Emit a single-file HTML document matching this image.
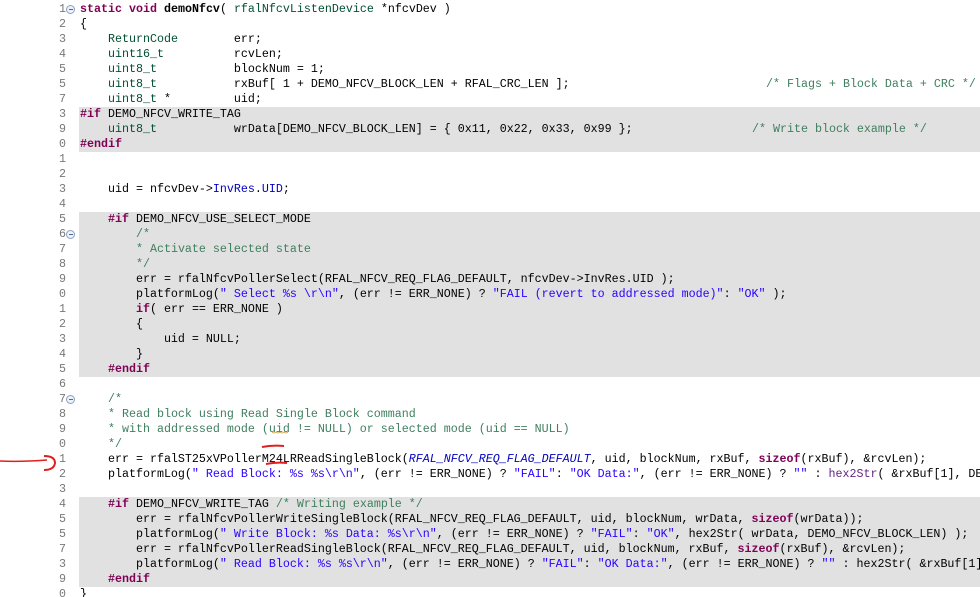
<!DOCTYPE html>
<html><head><meta charset="utf-8"><style>
body{margin:0;width:980px;height:595px;overflow:hidden;background:#fff;position:relative;font-family:"Liberation Mono",monospace;font-size:11.67px;}
#wrap{position:absolute;left:0;top:2px;width:980px;height:595px;overflow:hidden;}
.ln{position:absolute;left:0;width:980px;height:15px;line-height:15px;white-space:pre;overflow:hidden;}
.n{position:absolute;left:50px;width:16px;text-align:right;color:#787878;}
.tx{position:absolute;left:80px;color:#000;}
.bgc{position:absolute;left:79px;right:0;top:0;bottom:0;background:#e1e1e1;}
.k{color:#7f0055;font-weight:bold}
.t{color:#005032}
.s{color:#2a00ff}
.c{color:#3f7f5f}
.m{color:#0000c0;font-style:italic}
.f{color:#0000c0}
.h{color:#642880}
.fold{position:absolute;left:66px;top:3px;width:7px;height:7px;border:1px solid #8aa0c0;border-radius:50%;background:#eef2f8;}
.fold:after{content:"";position:absolute;left:1.5px;top:3px;width:4px;height:1px;background:#4a6a9a;}
.ab{position:absolute;}
</style></head><body>
<div id="wrap">
<div class="ln" style="top:0"><span class="n">1</span><span class="fold"></span><span class="tx"><span class="k">static</span> <span class="k">void</span> <b>demoNfcv</b>( <span class="t">rfalNfcvListenDevice</span> *nfcvDev )</span></div>
<div class="ln" style="top:15px"><span class="n">2</span><span class="tx">{</span></div>
<div class="ln" style="top:30px"><span class="n">3</span><span class="tx">    <span class="t">ReturnCode</span>        err;</span></div>
<div class="ln" style="top:45px"><span class="n">4</span><span class="tx">    <span class="t">uint16_t</span>          rcvLen;</span></div>
<div class="ln" style="top:60px"><span class="n">5</span><span class="tx">    <span class="t">uint8_t</span>           blockNum = 1;</span></div>
<div class="ln" style="top:75px"><span class="n">5</span><span class="tx">    <span class="t">uint8_t</span>           rxBuf[ 1 + DEMO_NFCV_BLOCK_LEN + RFAL_CRC_LEN ];<span class="c ab" style="left:686px">/* Flags + Block Data + CRC */</span></span></div>
<div class="ln" style="top:90px"><span class="n">7</span><span class="tx">    <span class="t">uint8_t</span> *         uid;</span></div>
<div class="ln" style="top:105px"><span class="bgc"></span><span class="n">3</span><span class="tx"><span class="k">#if</span> DEMO_NFCV_WRITE_TAG</span></div>
<div class="ln" style="top:120px"><span class="bgc"></span><span class="n">9</span><span class="tx">    <span class="t">uint8_t</span>           wrData[DEMO_NFCV_BLOCK_LEN] = { 0x11, 0x22, 0x33, 0x99 };<span class="c ab" style="left:672px">/* Write block example */</span></span></div>
<div class="ln" style="top:135px"><span class="bgc"></span><span class="n">0</span><span class="tx"><span class="k">#endif</span></span></div>
<div class="ln" style="top:150px"><span class="n">1</span></div>
<div class="ln" style="top:165px"><span class="n">2</span></div>
<div class="ln" style="top:180px"><span class="n">3</span><span class="tx">    uid = nfcvDev-&gt;<span class="f">InvRes</span>.<span class="f">UID</span>;</span></div>
<div class="ln" style="top:195px"><span class="n">4</span></div>
<div class="ln" style="top:210px"><span class="bgc"></span><span class="n">5</span><span class="tx">    <span class="k">#if</span> DEMO_NFCV_USE_SELECT_MODE</span></div>
<div class="ln" style="top:225px"><span class="bgc"></span><span class="n">6</span><span class="fold"></span><span class="tx">        <span class="c">/*</span></span></div>
<div class="ln" style="top:240px"><span class="bgc"></span><span class="n">7</span><span class="tx">        <span class="c">* Activate selected state</span></span></div>
<div class="ln" style="top:255px"><span class="bgc"></span><span class="n">8</span><span class="tx">        <span class="c">*/</span></span></div>
<div class="ln" style="top:270px"><span class="bgc"></span><span class="n">9</span><span class="tx">        err = rfalNfcvPollerSelect(RFAL_NFCV_REQ_FLAG_DEFAULT, nfcvDev-&gt;InvRes.UID );</span></div>
<div class="ln" style="top:285px"><span class="bgc"></span><span class="n">0</span><span class="tx">        platformLog(<span class="s">" Select %s \r\n"</span>, (err != ERR_NONE) ? <span class="s">"FAIL (revert to addressed mode)"</span>: <span class="s">"OK"</span> );</span></div>
<div class="ln" style="top:300px"><span class="bgc"></span><span class="n">1</span><span class="tx">        <span class="k">if</span>( err == ERR_NONE )</span></div>
<div class="ln" style="top:315px"><span class="bgc"></span><span class="n">2</span><span class="tx">        {</span></div>
<div class="ln" style="top:330px"><span class="bgc"></span><span class="n">3</span><span class="tx">            uid = NULL;</span></div>
<div class="ln" style="top:345px"><span class="bgc"></span><span class="n">4</span><span class="tx">        }</span></div>
<div class="ln" style="top:360px"><span class="bgc"></span><span class="n">5</span><span class="tx">    <span class="k">#endif</span></span></div>
<div class="ln" style="top:375px"><span class="n">6</span></div>
<div class="ln" style="top:390px"><span class="n">7</span><span class="fold"></span><span class="tx">    <span class="c">/*</span></span></div>
<div class="ln" style="top:405px"><span class="n">8</span><span class="tx">    <span class="c">* Read block using Read Single Block command</span></span></div>
<div class="ln" style="top:420px"><span class="n">9</span><span class="tx">    <span class="c">* with addressed mode (uid != NULL) or selected mode (uid == NULL)</span></span></div>
<div class="ln" style="top:435px"><span class="n">0</span><span class="tx">    <span class="c">*/</span></span></div>
<div class="ln" style="top:450px"><span class="n">1</span><span class="tx">    err = rfalST25xVPollerM24LRReadSingleBlock(<span class="m">RFAL_NFCV_REQ_FLAG_DEFAULT</span>, uid, blockNum, rxBuf, <span class="k">sizeof</span>(rxBuf), &amp;rcvLen);</span></div>
<div class="ln" style="top:465px"><span class="n">2</span><span class="tx">    platformLog(<span class="s">" Read Block: %s %s\r\n"</span>, (err != ERR_NONE) ? <span class="s">"FAIL"</span>: <span class="s">"OK Data:"</span>, (err != ERR_NONE) ? <span class="s">""</span> : <span class="h">hex2Str</span>( &amp;rxBuf[1], DEMO_NFCV_BLOCK_LEN) );</span></div>
<div class="ln" style="top:480px"><span class="n">3</span></div>
<div class="ln" style="top:495px"><span class="bgc"></span><span class="n">4</span><span class="tx">    <span class="k">#if</span> DEMO_NFCV_WRITE_TAG <span class="c">/* Writing example */</span></span></div>
<div class="ln" style="top:510px"><span class="bgc"></span><span class="n">5</span><span class="tx">        err = rfalNfcvPollerWriteSingleBlock(RFAL_NFCV_REQ_FLAG_DEFAULT, uid, blockNum, wrData, <span class="k">sizeof</span>(wrData));</span></div>
<div class="ln" style="top:525px"><span class="bgc"></span><span class="n">5</span><span class="tx">        platformLog(<span class="s">" Write Block: %s Data: %s\r\n"</span>, (err != ERR_NONE) ? <span class="s">"FAIL"</span>: <span class="s">"OK"</span>, hex2Str( wrData, DEMO_NFCV_BLOCK_LEN) );</span></div>
<div class="ln" style="top:540px"><span class="bgc"></span><span class="n">7</span><span class="tx">        err = rfalNfcvPollerReadSingleBlock(RFAL_NFCV_REQ_FLAG_DEFAULT, uid, blockNum, rxBuf, <span class="k">sizeof</span>(rxBuf), &amp;rcvLen);</span></div>
<div class="ln" style="top:555px"><span class="bgc"></span><span class="n">3</span><span class="tx">        platformLog(<span class="s">" Read Block: %s %s\r\n"</span>, (err != ERR_NONE) ? <span class="s">"FAIL"</span>: <span class="s">"OK Data:"</span>, (err != ERR_NONE) ? <span class="s">""</span> : hex2Str( &amp;rxBuf[1], DEMO_NFCV_BLOCK_LEN) );</span></div>
<div class="ln" style="top:570px"><span class="bgc"></span><span class="n">9</span><span class="tx">    <span class="k">#endif</span></span></div>
<div class="ln" style="top:585px"><span class="n">0</span><span class="tx">}</span></div>
</div>
<svg style="position:absolute;left:0;top:0" width="980" height="595">
<path d="M262 447 Q272 445 284 446" stroke="#e02020" stroke-width="2" fill="none"/>
<path d="M266 464 Q276 462 287 463" stroke="#e02020" stroke-width="2" fill="none"/>
<path d="M0 461 Q20 462 47 460" stroke="#e02020" stroke-width="1.5" fill="none"/>
<path d="M44 456 Q55 456 55 463 Q54 470 44 470" stroke="#e02020" stroke-width="2" fill="none"/>
<path d="M272 432 q2 2 4 0 q2 2 4 0 q2 2 4 0 q2 2 4 0" stroke="#c8a040" stroke-width="0.8" fill="none"/>
</svg>
</body></html>
